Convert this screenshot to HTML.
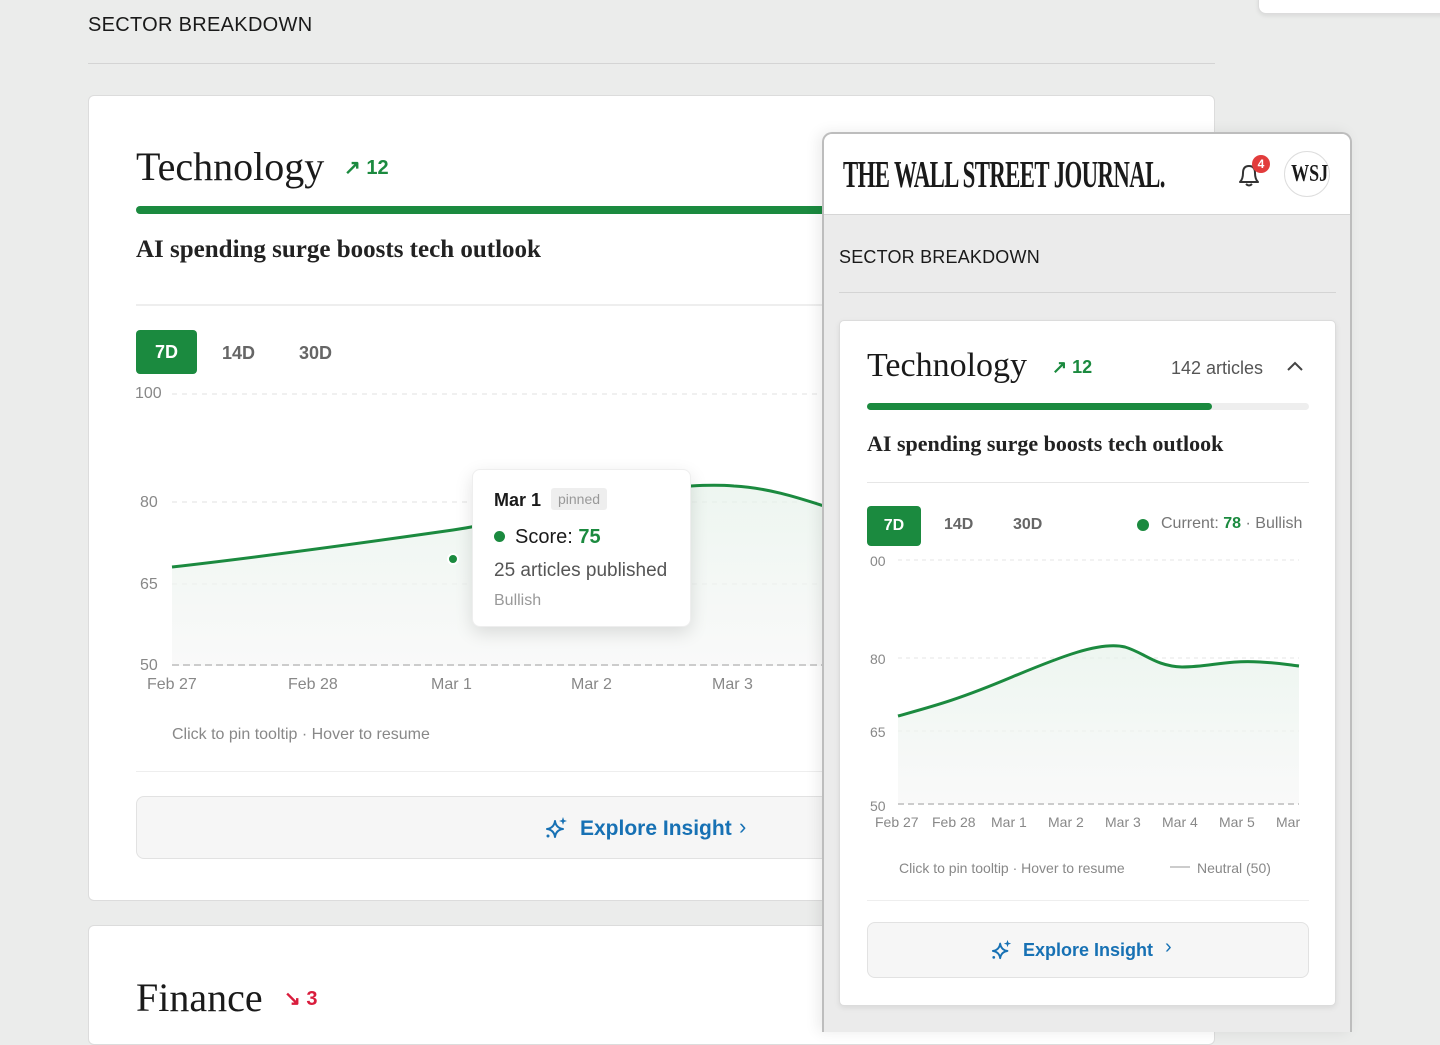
<!DOCTYPE html>
<html><head><meta charset="utf-8"><style>
*{margin:0;padding:0;box-sizing:border-box}
body{width:1440px;height:1024px;overflow:hidden;background:#ebeceb;font-family:"Liberation Sans",sans-serif;position:relative;color:#1a1a1a}
.a{position:absolute}
.serif{font-family:"Liberation Serif",serif}
.card{position:absolute;background:#fff;border:1px solid #dcdcdc;border-radius:6px}
.g{color:#1b8a3f}
.tab{position:absolute;font-weight:bold;color:#666;font-size:18px}
.on{background:#1b8a3f;color:#fff;border-radius:4px;text-align:center}
.lbl{position:absolute;color:#888;font-size:16px}
.btn{position:absolute;background:#f6f6f6;border:1px solid #e2e2e2;border-radius:8px}
.ex{color:#1771b4;font-weight:bold}
</style></head><body>
<div class="card" style="left:1258px;top:-10px;width:200px;height:24px;border-radius:8px;box-shadow:0 2px 4px rgba(0,0,0,.08)"></div>
<div class="a" style="left:88px;top:14px;font-size:20px;letter-spacing:.3px">SECTOR BREAKDOWN</div>
<div class="a" style="left:88px;top:63px;width:1127px;height:1px;background:#d4d4d4"></div>

<!-- main card -->
<div class="card" style="left:88px;top:95px;width:1127px;height:806px;overflow:hidden">
 <div class="a serif" style="left:47px;top:47px;font-size:40px">Technology</div>
 <div class="a g" style="left:255px;top:59px;font-size:20px;font-weight:bold">↗ 12</div>
 <div class="a" style="left:47px;top:110px;width:1040px;height:8px;border-radius:4px;background:#1b8a3f"></div>
 <div class="a serif" style="left:47px;top:140px;font-size:25px;font-weight:bold;color:#222">AI spending surge boosts tech outlook</div>
 <div class="a" style="left:47px;top:208px;width:1040px;height:2px;background:#eee"></div>
 <div class="tab on" style="left:47px;top:234px;width:61px;height:44px;line-height:44px">7D</div>
 <div class="tab" style="left:133px;top:247px">14D</div>
 <div class="tab" style="left:210px;top:247px">30D</div>
 <svg class="a" style="left:0;top:280px" width="1127" height="420">
  <defs><linearGradient id="f1" x1="0" y1="0" x2="0" y2="1"><stop offset="0" stop-color="#e6f2ea"/><stop offset="1" stop-color="#f7f7f7"/></linearGradient></defs>
  <g stroke="#e2e2e2" stroke-dasharray="5 5" stroke-width="1"><line x1="83" y1="18" x2="1127" y2="18"/><line x1="83" y1="126" x2="1127" y2="126"/><line x1="83" y1="208" x2="1127" y2="208"/></g>
  <path d="M83 191 C180 180 280 166 364 154 C430 144 480 126 540 116 C590 110 620 108 645 110 C680 112 710 122 735 130 L735 290 L83 290Z" fill="url(#f1)" opacity=".7"/>
  <line x1="83" y1="289" x2="1127" y2="289" stroke="#ccc" stroke-width="2" stroke-dasharray="7 4"/>
  <path d="M83 191 C180 180 280 166 364 154 C430 144 480 126 540 116 C590 110 620 108 645 110 C680 112 710 122 735 130" fill="none" stroke="#1b8a3f" stroke-width="3"/>
  <circle cx="364" cy="183" r="5" fill="#1b8a3f" stroke="#fff" stroke-width="2"/>
 </svg>
 <div class="lbl" style="left:46px;top:289px">100</div>
 <div class="lbl" style="left:51px;top:398px">80</div>
 <div class="lbl" style="left:51px;top:480px">65</div>
 <div class="lbl" style="left:51px;top:561px">50</div>
 <div class="lbl" style="left:58px;top:580px">Feb 27</div>
 <div class="lbl" style="left:199px;top:580px">Feb 28</div>
 <div class="lbl" style="left:342px;top:580px">Mar 1</div>
 <div class="lbl" style="left:482px;top:580px">Mar 2</div>
 <div class="lbl" style="left:623px;top:580px">Mar 3</div>
 <div class="a" style="left:383px;top:373px;width:219px;height:158px;background:#fff;border:1px solid #eee;border-radius:8px;box-shadow:0 6px 18px rgba(0,0,0,.12)">
  <div class="a" style="left:21px;top:20px;font-size:18px;font-weight:bold">Mar 1</div>
  <div class="a" style="left:78px;top:18px;background:#eee;color:#999;font-size:14px;padding:3px 7px;border-radius:3px">pinned</div>
  <div class="a" style="left:21px;top:61px;width:11px;height:11px;border-radius:50%;background:#1b8a3f"></div>
  <div class="a" style="left:42px;top:56px;font-size:20px">Score: <b class="g">75</b></div>
  <div class="a" style="left:21px;top:90px;font-size:19px;color:#555">25 articles published</div>
  <div class="a" style="left:21px;top:122px;font-size:16px;color:#999">Bullish</div>
 </div>
 <div class="lbl" style="left:83px;top:630px;color:#888">Click to pin tooltip · Hover to resume</div>
 <div class="a" style="left:47px;top:675px;width:1040px;height:1px;background:#eee"></div>
 <div class="btn" style="left:47px;top:700px;width:1040px;height:63px"></div>
 <svg class="a" style="left:456px;top:720px" width="24" height="24" viewBox="0 0 24 24"><path d="M10 5 Q11 12 18 13 Q11 14 10 21 Q9 14 2 13 Q9 12 10 5Z" fill="none" stroke="#1771b4" stroke-width="2" stroke-linejoin="round"/><path d="M18 1 L19 4 L22 5 L19 6 L18 9 L17 6 L14 5 L17 4Z" fill="#1771b4"/><circle cx="3" cy="20" r="1.5" fill="#1771b4"/></svg>
 <div class="a ex" style="left:491px;top:721px;font-size:21px">Explore Insight</div>
 <div class="a ex" style="left:650px;top:718px;font-size:22px;font-weight:normal">›</div>
</div>

<div class="card" style="left:88px;top:925px;width:1127px;height:120px">
 <div class="a serif" style="left:47px;top:48px;font-size:40px">Finance</div>
 <div class="a" style="left:195px;top:60px;font-size:20px;font-weight:bold;color:#d91c3c">↘ 3</div>
</div>

<!-- phone -->
<div class="a" style="left:822px;top:132px;width:530px;height:900px;background:#ebebeb;border:2px solid #bdbdbd;border-bottom:none;border-radius:10px 10px 0 0;overflow:hidden;box-shadow:-4px 0 14px rgba(0,0,0,.08);z-index:5">
 <div class="a" style="left:0;top:0;width:530px;height:81px;background:#fff;border-bottom:1px solid #d6d6d6"></div>
 <div class="a serif" style="left:19px;top:19px;font-size:38px;font-weight:bold;letter-spacing:-1px;transform:scaleX(.6);transform-origin:left;white-space:nowrap">THE WALL STREET JOURNAL.</div>
 <svg class="a" style="left:410px;top:24px" width="30" height="32" viewBox="0 0 30 32"><path d="M6 24 Q9 21 9 15 Q9 8 15 8 Q21 8 21 15 Q21 21 24 24Z M12 26 Q15 29 18 26" fill="none" stroke="#333" stroke-width="2" stroke-linejoin="round"/></svg>
 <div class="a" style="left:428px;top:21px;width:18px;height:18px;border-radius:50%;background:#e23c3c;color:#fff;font-size:12px;font-weight:bold;text-align:center;line-height:18px">4</div>
 <div class="a serif" style="left:460px;top:17px;width:46px;height:46px;border-radius:50%;border:1px solid #ddd;background:#fff;font-weight:bold;font-size:24px;text-align:center;line-height:44px"><span style="display:inline-block;transform:scaleX(.75)">WSJ</span></div>
 <div class="a" style="left:15px;top:113px;font-size:18px;letter-spacing:.2px">SECTOR BREAKDOWN</div>
 <div class="a" style="left:15px;top:158px;width:497px;height:1px;background:#d4d4d4"></div>
 <div class="card" style="left:15px;top:186px;width:497px;height:686px;border-radius:5px;box-shadow:0 2px 6px rgba(0,0,0,.08)">
  <div class="a serif" style="left:27px;top:26px;font-size:34px">Technology</div>
  <div class="a g" style="left:212px;top:36px;font-size:18px;font-weight:bold">↗ 12</div>
  <div class="a" style="left:331px;top:37px;font-size:18px;color:#555">142 articles</div>
  <svg class="a" style="left:446px;top:38px" width="18" height="14"><path d="M2 11 L9 4 L16 11" fill="none" stroke="#444" stroke-width="2"/></svg>
  <div class="a" style="left:27px;top:82px;width:442px;height:7px;border-radius:4px;background:#eee"></div>
  <div class="a" style="left:27px;top:82px;width:345px;height:7px;border-radius:4px;background:#1b8a3f"></div>
  <div class="a serif" style="left:27px;top:110px;font-size:22px;font-weight:bold;color:#222">AI spending surge boosts tech outlook</div>
  <div class="a" style="left:27px;top:161px;width:442px;height:1px;background:#e6e6e6"></div>
  <div class="tab on" style="left:27px;top:185px;width:54px;height:40px;line-height:40px;font-size:16px">7D</div>
  <div class="tab" style="left:104px;top:195px;font-size:16px">14D</div>
  <div class="tab" style="left:173px;top:195px;font-size:16px">30D</div>
  <div class="a" style="left:297px;top:198px;width:12px;height:12px;border-radius:50%;background:#1b8a3f"></div>
  <div class="a" style="left:321px;top:194px;font-size:16px;color:#777">Current: <b class="g">78</b> · Bullish</div>
  <svg class="a" style="left:0;top:220px" width="497" height="280">
   <defs><linearGradient id="f2" x1="0" y1="0" x2="0" y2="1"><stop offset="0" stop-color="#e6f2ea"/><stop offset="1" stop-color="#f7f7f7"/></linearGradient></defs>
   <g stroke="#e4e4e4" stroke-dasharray="4 4"><line x1="58" y1="19" x2="459" y2="19"/><line x1="58" y1="117" x2="459" y2="117"/><line x1="58" y1="190" x2="459" y2="190"/></g>
   <path d="M58 175 C90 166 115 160 172 136 C220 116 260 100 285 106 C305 112 315 125 342 126 C370 126 385 119 420 121 C440 122 450 124 459 125 L459 263 L58 263Z" fill="url(#f2)" opacity=".7"/>
   <line x1="58" y1="263" x2="459" y2="263" stroke="#ccc" stroke-width="2" stroke-dasharray="6 4"/>
   <path d="M58 175 C90 166 115 160 172 136 C220 116 260 100 285 106 C305 112 315 125 342 126 C370 126 385 119 420 121 C440 122 450 124 459 125" fill="none" stroke="#1b8a3f" stroke-width="3"/>
  </svg>
  <div class="lbl" style="left:30px;top:232px;font-size:14px">00</div>
  <div class="lbl" style="left:30px;top:330px;font-size:14px">80</div>
  <div class="lbl" style="left:30px;top:403px;font-size:14px">65</div>
  <div class="lbl" style="left:30px;top:477px;font-size:14px">50</div>
  <div class="lbl" style="left:35px;top:493px;font-size:14px;word-spacing:0;white-space:nowrap"><span style="display:inline-block;width:57px">Feb 27</span><span style="display:inline-block;width:59px">Feb 28</span><span style="display:inline-block;width:57px">Mar 1</span><span style="display:inline-block;width:57px">Mar 2</span><span style="display:inline-block;width:57px">Mar 3</span><span style="display:inline-block;width:57px">Mar 4</span><span style="display:inline-block;width:57px">Mar 5</span><span>Mar</span></div>
  <div class="lbl" style="left:59px;top:539px;font-size:14px">Click to pin tooltip · Hover to resume</div>
  <div class="a" style="left:330px;top:545px;width:20px;height:2px;background:#ccc"></div>
  <div class="lbl" style="left:357px;top:539px;font-size:14px">Neutral (50)</div>
  <div class="a" style="left:27px;top:579px;width:442px;height:1px;background:#eee"></div>
  <div class="btn" style="left:27px;top:601px;width:442px;height:56px"></div>
  <svg class="a" style="left:151px;top:618px" width="22" height="22" viewBox="0 0 24 24"><path d="M10 5 Q11 12 18 13 Q11 14 10 21 Q9 14 2 13 Q9 12 10 5Z" fill="none" stroke="#1771b4" stroke-width="2" stroke-linejoin="round"/><path d="M18 1 L19 4 L22 5 L19 6 L18 9 L17 6 L14 5 L17 4Z" fill="#1771b4"/><circle cx="3" cy="20" r="1.5" fill="#1771b4"/></svg>
  <div class="a ex" style="left:183px;top:619px;font-size:18px">Explore Insight</div>
  <div class="a ex" style="left:325px;top:615px;font-size:20px;font-weight:normal">›</div>
 </div>
</div>
</body></html>
